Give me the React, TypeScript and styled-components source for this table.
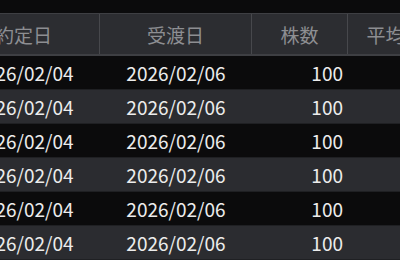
import React, {ReactElement, useLayoutEffect, useRef} from 'react';
import styled, {createGlobalStyle} from 'styled-components';

type Column = {
    key: string;
    label: string;
    width: number;
};

type Trade = {
    tradeDate: string;
    settleDate: string;
    shares: number;
    avgPrice: string;
};

const columns: Column[] = [
    {key: 'tradeDate', label: '約定日', width: 152},
    {key: 'settleDate', label: '受渡日', width: 152},
    {key: 'shares', label: '株数', width: 96},
    {key: 'avgPrice', label: '平均取得単価', width: 152},
];

const trades: Trade[] = Array.from({length: 6}, () => ({
    tradeDate: '2026/02/04',
    settleDate: '2026/02/06',
    shares: 100,
    avgPrice: '',
}));

const GlobalStyle = createGlobalStyle`
    html, body {
        margin: 0;
        padding: 0;
        background: #0b0b0c;
    }
    body {
        font-family: "Noto Sans CJK JP", "Noto Sans", sans-serif;
    }
`;

export default function App(): ReactElement {
    const scrollRef = useRef<HTMLDivElement>(null);

    // the table is scrolled a little to the right in the screenshot
    useLayoutEffect(() => {
        if (scrollRef.current) scrollRef.current.scrollLeft = 52;
    }, []);

    const template = columns.map((c) => `${c.width}px`).join(' ');

    return (
        <>
            <GlobalStyle />
            <Page>
                <TopBar />
                <Scroller ref={scrollRef}>
                    <Table>
                        <HeaderRow cols={template}>
                            {columns.map((c) => (
                                <HeaderCell key={c.key}>{c.label}</HeaderCell>
                            ))}
                        </HeaderRow>
                        {trades.map((t, i) => (
                            <Row key={i} cols={template} striped={i % 2 === 1}>
                                <Cell align="center">{t.tradeDate}</Cell>
                                <Cell align="center">{t.settleDate}</Cell>
                                <Cell align="right">{t.shares}</Cell>
                                <Cell align="right">{t.avgPrice}</Cell>
                            </Row>
                        ))}
                    </Table>
                </Scroller>
            </Page>
        </>
    );
}

const Page = styled.div`
    width: 400px;
    height: 260px;
    overflow: hidden;
    background: #0b0b0c;
`;

const TopBar = styled.div`
    height: 13px;
    background: #0b0b0c;
`;

const Scroller = styled.div`
    overflow-x: auto;
    scrollbar-width: none;

    &::-webkit-scrollbar {
        display: none;
    }
`;

const Table = styled.div`
    width: max-content;
`;

const HeaderRow = styled.div<{cols: string}>`
    display: grid;
    grid-template-columns: ${({cols}): string => cols};
    height: 40px;
    background: #2c2d31;
    border-top: 1px solid #3e3f43;
    border-bottom: 2px solid #3e3f43;
`;

const HeaderCell = styled.div`
    display: flex;
    align-items: center;
    justify-content: center;
    color: #8d8e92;
    font-size: 19px;
    border-right: 1px solid #47484c;
`;

const Row = styled.div<{cols: string; striped: boolean}>`
    display: grid;
    grid-template-columns: ${({cols}): string => cols};
    height: 33px;
    border-bottom: 1px solid #1f2023;
    background: ${({striped}): string => (striped ? '#2b2c30' : '#0b0b0c')};
`;

const Cell = styled.div<{align: 'center' | 'right'}>`
    display: flex;
    align-items: center;
    justify-content: ${({align}): string => (align === 'center' ? 'center' : 'flex-end')};
    padding: 0 5px;
    color: #ececec;
    font-size: 19px;
`;
